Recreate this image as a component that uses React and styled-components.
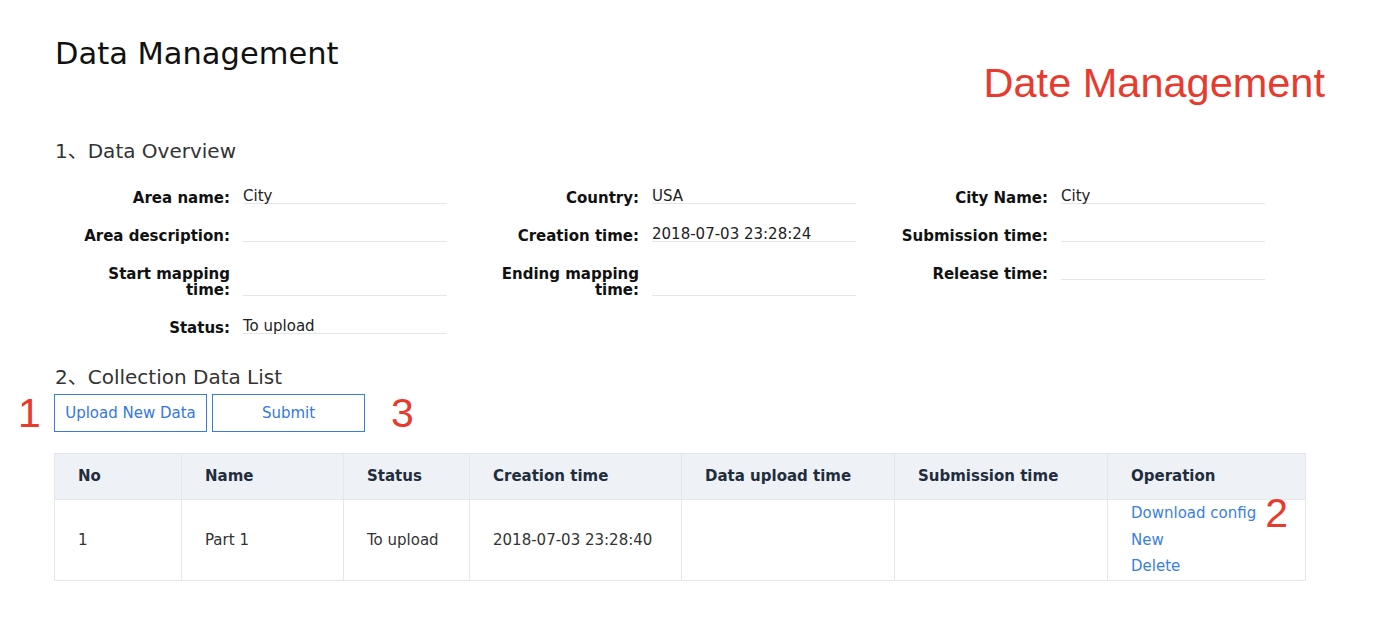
import React from 'react'
import styled, { createGlobalStyle } from 'styled-components'

const GlobalStyle = createGlobalStyle`
  body {
    margin: 0;
    background: #fff;
    font-family: 'DejaVu Sans', 'Noto Sans CJK SC', sans-serif;
    color: #222;
  }
`;

const overview = [
  { label: 'Area name:', value: 'City' },
  { label: 'Country:', value: 'USA' },
  { label: 'City Name:', value: 'City' },
  { label: 'Area description:', value: '' },
  { label: 'Creation time:', value: '2018-07-03 23:28:24' },
  { label: 'Submission time:', value: '' },
  { label: 'Start mapping time:', value: '' },
  { label: 'Ending mapping time:', value: '' },
  { label: 'Release time:', value: '' },
  { label: 'Status:', value: 'To upload' },
];

const columns = [
  { title: 'No', width: 127 },
  { title: 'Name', width: 162 },
  { title: 'Status', width: 126 },
  { title: 'Creation time', width: 212 },
  { title: 'Data upload time', width: 213 },
  { title: 'Submission time', width: 213 },
  { title: 'Operation', width: 198 },
];

const rows = [
  { no: 1, name: 'Part 1', status: 'To upload', created: '2018-07-03 23:28:40', uploaded: '', submitted: '' },
];

export default function App() {
  return (
    <Page>
      <GlobalStyle />
      <Header>
        <Title>Data Management</Title>
        <Annotation>Date Management</Annotation>
      </Header>

      <SectionTitle>1、Data Overview</SectionTitle>
      <FieldGrid>
        {overview.map((f) => (
          <Field key={f.label}>
            <Label $wrap={f.label.length > 18}>{f.label}</Label>
            <Value>{f.value}</Value>
          </Field>
        ))}
      </FieldGrid>

      <SectionTitle $top={29}>2、Collection Data List</SectionTitle>
      <Toolbar>
        <Marker $left>1</Marker>
        <Button>Upload New Data</Button>
        <Button>Submit</Button>
        <Marker>3</Marker>
      </Toolbar>

      <Table>
        <colgroup>
          {columns.map((c) => <col key={c.title} width={c.width} />)}
        </colgroup>
        <thead>
          <tr>
            {columns.map((c) => <Th key={c.title}>{c.title}</Th>)}
          </tr>
        </thead>
        <tbody>
          {rows.map((r) => (
            <tr key={r.no}>
              <Td>{r.no}</Td>
              <Td>{r.name}</Td>
              <Td>{r.status}</Td>
              <Td>{r.created}</Td>
              <Td>{r.uploaded}</Td>
              <Td>{r.submitted}</Td>
              <Td>
                <LinkRow>
                  <OpLink>Download config</OpLink>
                  <RowMarker>2</RowMarker>
                </LinkRow>
                <LinkRow><OpLink>New</OpLink></LinkRow>
                <LinkRow><OpLink>Delete</OpLink></LinkRow>
              </Td>
            </tr>
          ))}
        </tbody>
      </Table>
    </Page>
  )
}

const Page = styled.div`
  padding: 36px 53px 0 55px;
`;

const Header = styled.div`
  display: flex;
  justify-content: space-between;
  align-items: flex-start;
`;

const Title = styled.h1`
  margin: 0;
  font-size: 30.5px;
  font-weight: 400;
  line-height: 36px;
  color: #111;
`;

const Annotation = styled.div`
  margin-top: 26px;
  font-family: 'Liberation Sans', Arial, sans-serif;
  font-size: 41.5px;
  line-height: 1;
  color: #e93a2e;
`;

const SectionTitle = styled.h2`
  margin: ${(p) => p.$top ?? 35}px 0 0;
  font-size: 20px;
  font-weight: 400;
  line-height: 24px;
  color: #333;
`;

const FieldGrid = styled.div`
  display: grid;
  grid-template-columns: repeat(3, 392px);
  column-gap: 17px;
  row-gap: 22px;
  align-items: start;
  margin-top: 27px;
`;

const Field = styled.div`
  display: grid;
  grid-template-columns: 175px 204px;
  column-gap: 13px;
  align-items: end;
`;

const Label = styled.div`
  text-align: right;
  font-size: 15px;
  font-weight: 700;
  line-height: 16px;
  color: #111;
  ${(p) => p.$wrap && 'padding-left: 30px;'}
`;

const Value = styled.div`
  font-size: 15px;
  line-height: 13px;
  min-height: 13px;
  margin-bottom: 2px;
  border-bottom: 1px solid #e6e6e6;
  color: #222;
`;

const Toolbar = styled.div`
  display: flex;
  align-items: center;
  gap: 5px;
  margin: 5px 0 0 -1px;
  height: 38px;
`;

const Marker = styled.span`
  font-family: 'Liberation Sans', Arial, sans-serif;
  font-size: 41px;
  line-height: 38px;
  color: #e93a2e;
  ${(p) => (p.$left
    ? 'width: 36px; margin-left: -36px; margin-right: -5px;'
    : 'margin-left: 21px;')}
`;

const Button = styled.button`
  width: 153px;
  height: 38px;
  padding: 0;
  background: #fff;
  border: 1px solid #3a7be0;
  color: #3478e0;
  font-family: inherit;
  font-size: 15px;
  cursor: pointer;
`;

const Table = styled.table`
  margin: 21px 0 0 -1px;
  width: 1251px;
  table-layout: fixed;
  border-collapse: collapse;
`;

const Th = styled.th`
  height: 45px;
  padding: 0 23px;
  text-align: left;
  background: #eef1f6;
  border: 1px solid #e4e7ed;
  font-size: 15px;
  font-weight: 700;
  color: #1f2d3d;
`;

const Td = styled.td`
  height: 80px;
  padding: 0 23px;
  border: 1px solid #e4e7ed;
  font-size: 15px;
  color: #333;
  vertical-align: middle;
`;

const LinkRow = styled.div`
  display: flex;
  align-items: center;
  height: 26.5px;
`;

const OpLink = styled.a`
  color: #3a7fe0;
  cursor: pointer;
  white-space: nowrap;
`;

const RowMarker = styled.span`
  margin-left: 9px;
  font-family: 'Liberation Sans', Arial, sans-serif;
  font-size: 41px;
  line-height: 26px;
  color: #e93a2e;
`;
